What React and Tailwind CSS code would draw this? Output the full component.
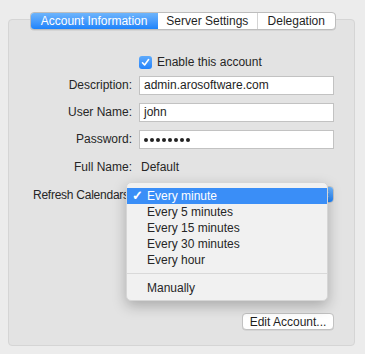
import React from "react";

const font = { fontFamily: '"Liberation Sans", Arial, sans-serif' };

const tabs = [
  { label: "Account Information", w: "w-[128px]", active: true },
  { label: "Server Settings", w: "w-[100px]" },
  { label: "Delegation", w: "w-[78px]" },
];

const intervals = ["Every minute", "Every 5 minutes", "Every 15 minutes", "Every 30 minutes", "Every hour"];

function Field({ label, children }) {
  return (
    <>
      <div className="text-right text-[12px] leading-[19px] text-[#262626]">{label}</div>
      <div className="h-[19px]">{children}</div>
    </>
  );
}

function TextInput({ value }) {
  return (
    <div className="h-[19px] border border-[#c2c2c2] bg-white px-[4px] text-[12px] leading-[17px] text-[#1e1e1e]">
      {value}
    </div>
  );
}

export default function App() {
  return (
    <div className="w-[365px] h-[354px] bg-[#ececec] pt-[12px] px-[8px] antialiased" style={font}>
      {/* Segmented tabs */}
      <div className="relative z-10 mx-auto flex h-[18px] w-[306px] overflow-hidden rounded-[4px] border border-[#bdbdbd] bg-white shadow-[0_0.5px_0.5px_rgba(0,0,0,0.12)]">
        {tabs.map((t, i) => (
          <div
            key={t.label}
            className={`${t.w} flex items-center justify-center text-[12px] leading-none ${
              t.active
                ? "bg-gradient-to-b from-[#6db4fb] to-[#1b83fb] text-white"
                : "text-[#1f1f1f]"
            } ${i > 0 && !tabs[i - 1].active ? "border-l border-[#d4d4d4]" : ""}`}
          >
            {t.label}
          </div>
        ))}
      </div>

      {/* Panel */}
      <div className="-mt-[11px] flex h-[327px] w-[347px] flex-col rounded-[4px] border border-[#d5d5d5] bg-[#e3e3e3] pr-[20px]">
        <div className="mt-[35px] flex h-[14px] items-center pl-[130px] text-[12px] text-[#262626]">
          <div className="flex h-[13px] w-[13px] items-center justify-center rounded-[3px] bg-gradient-to-b from-[#5eaafb] to-[#2283fb]">
            <svg width="9" height="9" viewBox="0 0 9 9">
              <path d="M1.5 4.8 L3.6 7 L7.6 1.6" fill="none" stroke="white" strokeWidth="1.6" strokeLinecap="round" strokeLinejoin="round" />
            </svg>
          </div>
          <span className="ml-[5px]">Enable this account</span>
        </div>

        <div className="mt-[7px] grid grid-cols-[123px_1fr] gap-x-[7px] gap-y-[8px]">
          <Field label="Description:">
            <TextInput value="admin.arosoftware.com" />
          </Field>
          <Field label="User Name:">
            <TextInput value="john" />
          </Field>
          <Field label="Password:">
            <div className="flex h-[19px] items-center gap-[2px] border border-[#c2c2c2] bg-white px-[4px]">
              {Array.from({ length: 8 }).map((_, i) => (
                <span key={i} className="h-[4px] w-[4px] rounded-full bg-[#222]" />
              ))}
            </div>
          </Field>
        </div>

        <div className="mt-[9px] grid grid-cols-[123px_1fr] gap-x-[7px] text-[12px] leading-[19px] text-[#262626]">
          <div className="text-right">Full Name:</div>
          <div className="pl-[2px]">Default</div>
        </div>

        <div className="mt-[9px] grid grid-cols-[123px_1fr] gap-x-[7px] text-[12px] leading-[18px] text-[#262626]">
          <div className="whitespace-nowrap pl-[24px] tracking-[-0.25px]">Refresh Calendars:</div>
          <div className="relative h-[18px]">
            <div className="flex h-[17px] overflow-hidden rounded-[4px] border border-[#c4c4c4] bg-white">
              <div className="flex-1" />
              <div className="flex w-[16px] items-center justify-center bg-gradient-to-b from-[#6db4fb] to-[#1b83fb]">
                <svg width="7" height="11" viewBox="0 0 7 11">
                  <path d="M1 4 L3.5 1.5 L6 4 M1 7 L3.5 9.5 L6 7" fill="none" stroke="white" strokeWidth="1.2" />
                </svg>
              </div>
            </div>

            {/* Open popup menu */}
            <div className="absolute -left-[13px] -top-[4px] z-20 w-[202px] rounded-[5px] border border-[#d6d6d6] bg-[#f1f1f1] pt-[5px] pb-[4px] shadow-[0_5px_14px_rgba(0,0,0,0.25)]">
              {intervals.map((label, i) => (
                <div
                  key={label}
                  className={`relative h-[16px] pl-[20px] text-[12px] leading-[16px] ${
                    i === 0 ? "bg-[#3a8ef7] text-white" : "text-[#262626]"
                  }`}
                >
                  {i === 0 && <span className="absolute left-[5px] top-0 text-[13px] font-bold">✓</span>}
                  {label}
                </div>
              ))}
              <div className="my-[5px] h-[2px] border-t border-[#d9d9d9]" />
              <div className="h-[16px] pl-[20px] text-[12px] leading-[16px] text-[#262626]">Manually</div>
            </div>
          </div>
        </div>

        <div className="mt-auto mb-[15px] flex justify-end">
          <div className="flex h-[17px] w-[92px] items-center justify-center rounded-[4px] border border-[#c2c2c2] bg-white text-[12px] text-[#1f1f1f] shadow-[0_0.5px_0.5px_rgba(0,0,0,0.12)]">
            Edit Account...
          </div>
        </div>
      </div>
    </div>
  );
}
